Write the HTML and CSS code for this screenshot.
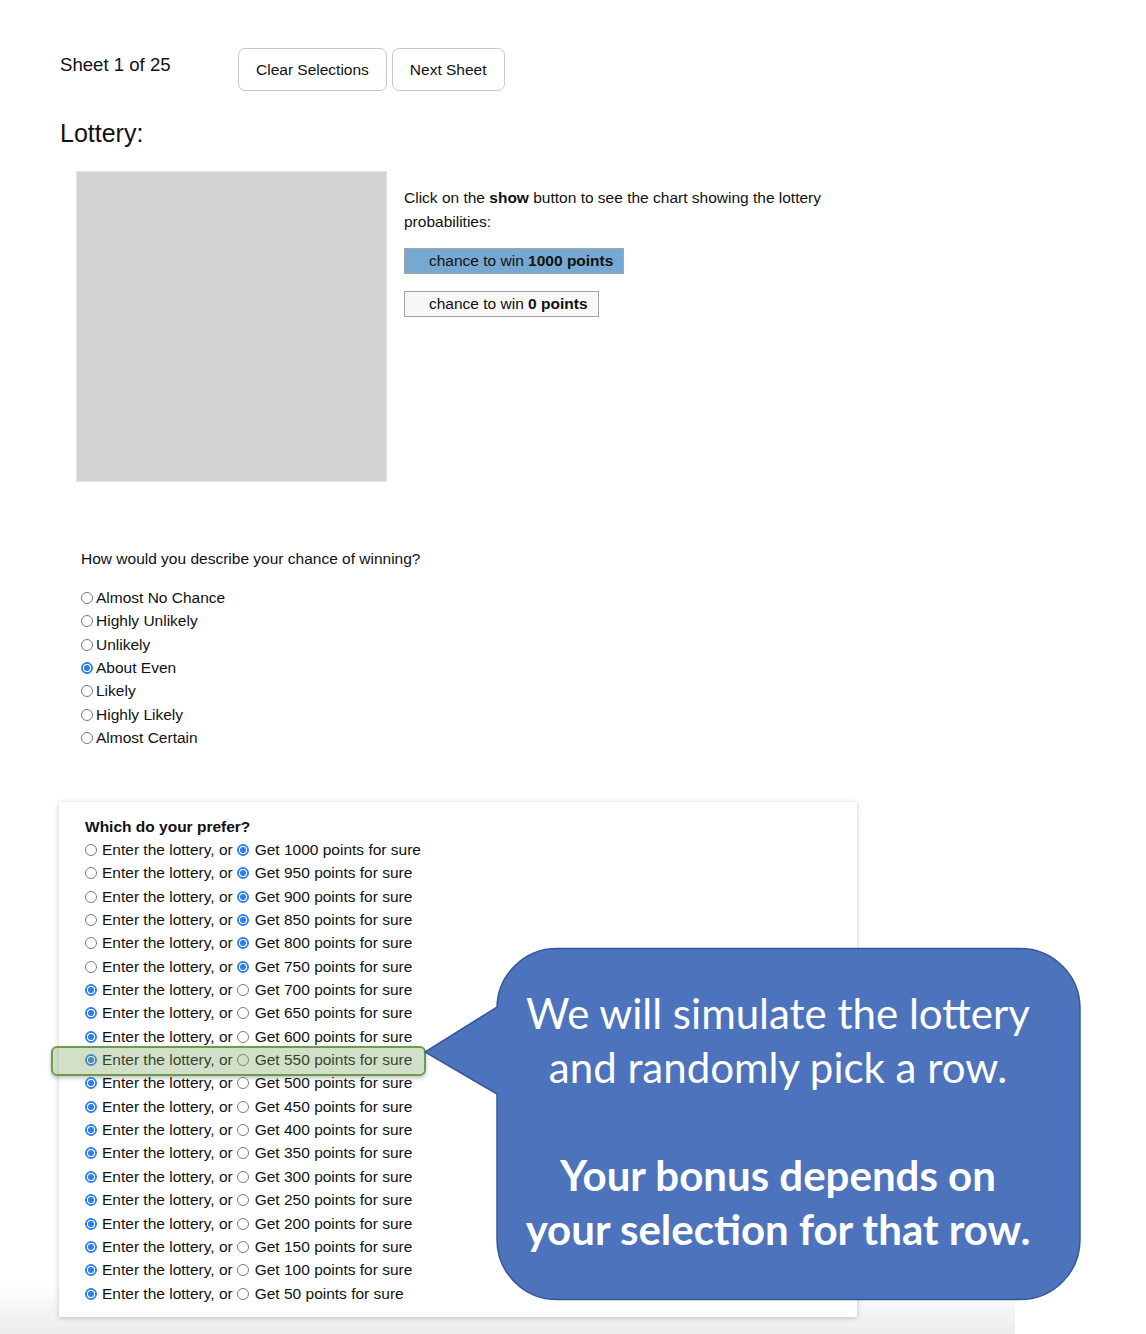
FILE: index.html
```html
<!DOCTYPE html>
<html lang="en">
<head>
<meta charset="utf-8">
<title>Lottery</title>
<link rel="stylesheet" href="styles.css">
</head>
<body>
<div class="page">
  <div class="topbar">
    <div class="sheet">Sheet 1 of 25</div>
    <div class="btns">
      <button class="btn" type="button">Clear Selections</button>
      <button class="btn" type="button">Next Sheet</button>
    </div>
  </div>

  <h2 class="title">Lottery:</h2>

  <div class="lottery">
    <div class="chart"></div>
    <div class="info">
      <p class="info-text">Click on the <b>show</b> button to see the chart showing the lottery probabilities:</p>
      <div class="legend legend--win">chance to win <b>1000 points</b></div>
      <div class="legend legend--lose">chance to win <b>0 points</b></div>
    </div>
  </div>

  <div class="describe">
    <p class="question">How would you describe your chance of winning?</p>
    <label class="opt"><input class="radio" type="radio" name="d">Almost No Chance</label>
    <label class="opt"><input class="radio" type="radio" name="d">Highly Unlikely</label>
    <label class="opt"><input class="radio" type="radio" name="d">Unlikely</label>
    <label class="opt"><input class="radio" type="radio" name="d" checked>About Even</label>
    <label class="opt"><input class="radio" type="radio" name="d">Likely</label>
    <label class="opt"><input class="radio" type="radio" name="d">Highly Likely</label>
    <label class="opt"><input class="radio" type="radio" name="d">Almost Certain</label>
  </div>

  <div class="card">
    <div class="card-title">Which do your prefer?</div>
    <div class="row"><input class="radio" type="radio" name="r1"><span class="lot">Enter the lottery, or</span><input class="radio radio--b" type="radio" name="r1" checked><span>Get 1000 points for sure</span></div>
    <div class="row"><input class="radio" type="radio" name="r2"><span class="lot">Enter the lottery, or</span><input class="radio radio--b" type="radio" name="r2" checked><span>Get 950 points for sure</span></div>
    <div class="row"><input class="radio" type="radio" name="r3"><span class="lot">Enter the lottery, or</span><input class="radio radio--b" type="radio" name="r3" checked><span>Get 900 points for sure</span></div>
    <div class="row"><input class="radio" type="radio" name="r4"><span class="lot">Enter the lottery, or</span><input class="radio radio--b" type="radio" name="r4" checked><span>Get 850 points for sure</span></div>
    <div class="row"><input class="radio" type="radio" name="r5"><span class="lot">Enter the lottery, or</span><input class="radio radio--b" type="radio" name="r5" checked><span>Get 800 points for sure</span></div>
    <div class="row"><input class="radio" type="radio" name="r6"><span class="lot">Enter the lottery, or</span><input class="radio radio--b" type="radio" name="r6" checked><span>Get 750 points for sure</span></div>
    <div class="row"><input class="radio" type="radio" name="r7" checked><span class="lot">Enter the lottery, or</span><input class="radio radio--b" type="radio" name="r7"><span>Get 700 points for sure</span></div>
    <div class="row"><input class="radio" type="radio" name="r8" checked><span class="lot">Enter the lottery, or</span><input class="radio radio--b" type="radio" name="r8"><span>Get 650 points for sure</span></div>
    <div class="row"><input class="radio" type="radio" name="r9" checked><span class="lot">Enter the lottery, or</span><input class="radio radio--b" type="radio" name="r9"><span>Get 600 points for sure</span></div>
    <div class="row row--hl"><input class="radio" type="radio" name="r10" checked><span class="lot">Enter the lottery, or</span><input class="radio radio--b" type="radio" name="r10"><span>Get 550 points for sure</span></div>
    <div class="row"><input class="radio" type="radio" name="r11" checked><span class="lot">Enter the lottery, or</span><input class="radio radio--b" type="radio" name="r11"><span>Get 500 points for sure</span></div>
    <div class="row"><input class="radio" type="radio" name="r12" checked><span class="lot">Enter the lottery, or</span><input class="radio radio--b" type="radio" name="r12"><span>Get 450 points for sure</span></div>
    <div class="row"><input class="radio" type="radio" name="r13" checked><span class="lot">Enter the lottery, or</span><input class="radio radio--b" type="radio" name="r13"><span>Get 400 points for sure</span></div>
    <div class="row"><input class="radio" type="radio" name="r14" checked><span class="lot">Enter the lottery, or</span><input class="radio radio--b" type="radio" name="r14"><span>Get 350 points for sure</span></div>
    <div class="row"><input class="radio" type="radio" name="r15" checked><span class="lot">Enter the lottery, or</span><input class="radio radio--b" type="radio" name="r15"><span>Get 300 points for sure</span></div>
    <div class="row"><input class="radio" type="radio" name="r16" checked><span class="lot">Enter the lottery, or</span><input class="radio radio--b" type="radio" name="r16"><span>Get 250 points for sure</span></div>
    <div class="row"><input class="radio" type="radio" name="r17" checked><span class="lot">Enter the lottery, or</span><input class="radio radio--b" type="radio" name="r17"><span>Get 200 points for sure</span></div>
    <div class="row"><input class="radio" type="radio" name="r18" checked><span class="lot">Enter the lottery, or</span><input class="radio radio--b" type="radio" name="r18"><span>Get 150 points for sure</span></div>
    <div class="row"><input class="radio" type="radio" name="r19" checked><span class="lot">Enter the lottery, or</span><input class="radio radio--b" type="radio" name="r19"><span>Get 100 points for sure</span></div>
    <div class="row"><input class="radio" type="radio" name="r20" checked><span class="lot">Enter the lottery, or</span><input class="radio radio--b" type="radio" name="r20"><span>Get 50 points for sure</span></div>
  </div>

  <div class="callout">
    <svg class="callout-shape" width="659" height="354" viewBox="0 0 659 354" aria-hidden="true">
      <path d="M134,1.5 H597 A60,60 0 0 1 657,61.5 V292.5 A60,60 0 0 1 597,352.5 H134 A60,60 0 0 1 74,292.5 V147 L2,105 L74,60 V61.5 A60,60 0 0 1 134,1.5 Z" fill="#4d73bd" stroke="#34589a" stroke-width="1.5"/>
    </svg>
    <div class="callout-text">
      <p class="callout-line">We will simulate the lottery<br>and randomly pick a row.</p>
      <p class="callout-line callout-line--bold">Your bonus depends on<br>your selection for that row.</p>
    </div>
  </div>
</div>
</body>
</html>
```

FILE: styles.css
```css
* { box-sizing: border-box; }

html, body {
  margin: 0;
  padding: 0;
  background: #fff;
}

body {
  font-family: "Liberation Sans", Arial, sans-serif;
  color: #111;
  font-size: 15.5px;
}

.page {
  position: relative;
  width: 1015px;
  min-height: 1334px;
  padding: 48px 0 0 60px;
  background: linear-gradient(to bottom, #fff 0, #fff 1282px, #ececec 1334px);
}

.topbar {
  display: flex;
  align-items: flex-start;
}

.sheet {
  width: 178px;
  margin-top: 6px;
  font-size: 18.6px;
  line-height: 22px;
}

.btns {
  display: flex;
  gap: 5px;
}

.btn {
  height: 43px;
  padding: 0 17px;
  border: 1px solid #c9c9c9;
  border-radius: 7px;
  background: #fff;
  font-family: "Liberation Sans", Arial, sans-serif;
  font-size: 15.5px;
  color: #111;
}

.title {
  margin: 27px 0 0;
  font-size: 25px;
  font-weight: normal;
  line-height: 30px;
}

.lottery {
  display: flex;
  margin: 23px 0 0 16px;
}

.chart {
  width: 311px;
  height: 311px;
  background: #d3d3d3;
  border: 1px solid #e2e2e2;
  flex: none;
}

.info {
  width: 440px;
  margin-left: 17px;
  padding-top: 15px;
}

.info-text {
  margin: 0;
  line-height: 23.5px;
}

.legend {
  display: block;
  height: 26px;
  line-height: 24px;
  padding: 0 10px 0 24px;
  border: 1px solid #a5a5a5;
  width: max-content;
}

.legend--win {
  margin-top: 15px;
  background: #77a8d1;
}

.legend--lose {
  margin-top: 17px;
  background: #f7f7f7;
}

.describe {
  margin: 65px 0 0 21px;
}

.question {
  margin: 0 0 16px;
  line-height: 23.5px;
}

.opt {
  display: flex;
  align-items: center;
  gap: 3px;
  height: 23.33px;
}

.radio {
  appearance: none;
  -webkit-appearance: none;
  width: 12px;
  height: 12px;
  margin: 0;
  border: 1px solid #7b7b7b;
  border-radius: 50%;
  background: #fff;
  flex: none;
}

.radio:checked {
  border-color: #2d7ff0;
  background: radial-gradient(circle, #2d7ff0 0 2.7px, #fff 3.3px 3.9px, #2d7ff0 4.5px);
}

.card {
  width: 798px;
  margin: 52px 0 0 -1px;
  padding: 13px 0 12px 26px;
  background: #fff;
  box-shadow: 0 1px 5px rgba(0, 0, 0, 0.22);
}

.card-title {
  font-weight: bold;
  line-height: 23.33px;
}

.row {
  position: relative;
  display: flex;
  align-items: center;
  height: 23.37px;
}

.lot {
  margin-left: 5px;
  margin-right: 4px;
}

.radio--b {
  margin-right: 6px;
}

.row--hl::after {
  content: "";
  position: absolute;
  left: -34px;
  top: -2px;
  width: 371px;
  height: 26px;
  border: 2px solid #6e9a4c;
  border-radius: 6px;
  background: rgba(120, 160, 90, 0.33);
  box-shadow: 0 2px 4px rgba(0, 0, 0, 0.25);
}

.callout {
  position: absolute;
  left: 423px;
  top: 947px;
  width: 659px;
  height: 354px;
}

.callout-shape {
  position: absolute;
  left: 0;
  top: 0;
}

.callout-text {
  position: absolute;
  left: 74px;
  top: 1px;
  width: 584px;
  height: 352px;
  padding: 0 22px 6px 0;
  display: flex;
  flex-direction: column;
  justify-content: center;
  align-items: center;
  gap: 54px;
  color: #fff;
  font-family: Lato, "Open Sans", sans-serif;
  font-size: 42px;
  text-align: center;
}

.callout-line {
  margin: 0;
  line-height: 54px;
  white-space: nowrap;
}

.callout-line--bold {
  font-weight: bold;
}
```
